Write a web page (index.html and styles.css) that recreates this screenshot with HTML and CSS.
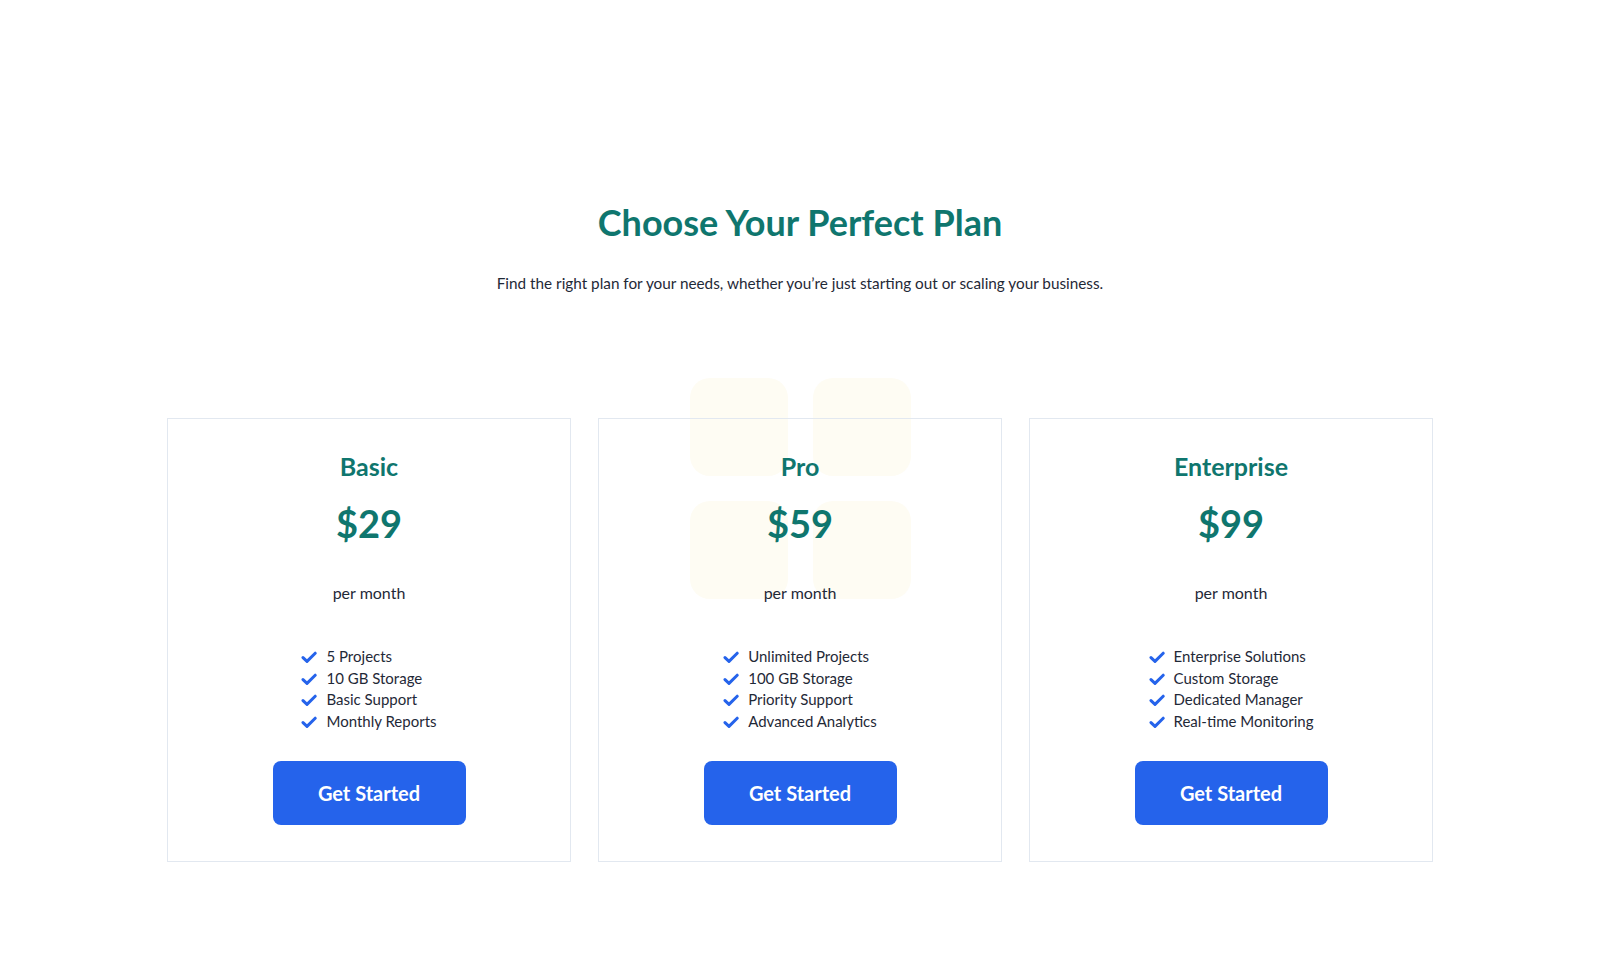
FILE: index.html
```html
<!DOCTYPE html>
<html lang="en">
<head>
<meta charset="utf-8">
<title>Pricing</title>
<link rel="stylesheet" href="styles.css">
</head>
<body>
<section class="pricing">
  <header class="pricing-head">
    <h1 class="pricing-title">Choose Your Perfect Plan</h1>
    <p class="pricing-sub">Find the right plan for your needs, whether you’re just starting out or scaling your business.</p>
  </header>
  <div class="plans">
    <div class="deco" aria-hidden="true">
      <span class="deco-tile"></span><span class="deco-tile"></span>
      <span class="deco-tile"></span><span class="deco-tile"></span>
    </div>
    <article class="plan">
      <h2 class="plan-name">Basic</h2>
      <div class="plan-price">$29</div>
      <div class="plan-period">per month</div>
      <ul class="plan-features">
        <li><svg class="check" viewBox="0 0 16 16"><path d="M2 8.6 L6 12.4 L14.2 4.2"/></svg>5 Projects</li>
        <li><svg class="check" viewBox="0 0 16 16"><path d="M2 8.6 L6 12.4 L14.2 4.2"/></svg>10 GB Storage</li>
        <li><svg class="check" viewBox="0 0 16 16"><path d="M2 8.6 L6 12.4 L14.2 4.2"/></svg>Basic Support</li>
        <li><svg class="check" viewBox="0 0 16 16"><path d="M2 8.6 L6 12.4 L14.2 4.2"/></svg>Monthly Reports</li>
      </ul>
      <a class="plan-btn" href="#">Get Started</a>
    </article>
    <article class="plan">
      <h2 class="plan-name">Pro</h2>
      <div class="plan-price">$59</div>
      <div class="plan-period">per month</div>
      <ul class="plan-features">
        <li><svg class="check" viewBox="0 0 16 16"><path d="M2 8.6 L6 12.4 L14.2 4.2"/></svg>Unlimited Projects</li>
        <li><svg class="check" viewBox="0 0 16 16"><path d="M2 8.6 L6 12.4 L14.2 4.2"/></svg>100 GB Storage</li>
        <li><svg class="check" viewBox="0 0 16 16"><path d="M2 8.6 L6 12.4 L14.2 4.2"/></svg>Priority Support</li>
        <li><svg class="check" viewBox="0 0 16 16"><path d="M2 8.6 L6 12.4 L14.2 4.2"/></svg>Advanced Analytics</li>
      </ul>
      <a class="plan-btn" href="#">Get Started</a>
    </article>
    <article class="plan">
      <h2 class="plan-name">Enterprise</h2>
      <div class="plan-price">$99</div>
      <div class="plan-period">per month</div>
      <ul class="plan-features">
        <li><svg class="check" viewBox="0 0 16 16"><path d="M2 8.6 L6 12.4 L14.2 4.2"/></svg>Enterprise Solutions</li>
        <li><svg class="check" viewBox="0 0 16 16"><path d="M2 8.6 L6 12.4 L14.2 4.2"/></svg>Custom Storage</li>
        <li><svg class="check" viewBox="0 0 16 16"><path d="M2 8.6 L6 12.4 L14.2 4.2"/></svg>Dedicated Manager</li>
        <li><svg class="check" viewBox="0 0 16 16"><path d="M2 8.6 L6 12.4 L14.2 4.2"/></svg>Real-time Monitoring</li>
      </ul>
      <a class="plan-btn" href="#">Get Started</a>
    </article>
  </div>
</section>
</body>
</html>
```
FILE: styles.css
```css
* { box-sizing: border-box; }
html, body { margin: 0; padding: 0; background: #ffffff; }
body {
  font-family: "Lato", "Noto Sans", sans-serif;
  color: #1f2937;
}
.pricing {
  width: 1266px;
  margin: 0 auto;
  padding-top: 200px;
}
.pricing-head { text-align: center; }
.pricing-title {
  margin: 0;
  font-size: 36px;
  line-height: 44px;
  font-weight: 700;
  color: #0f766e;
}
.pricing-sub {
  margin: 27px 0 0;
  font-size: 15.3px;
  line-height: 24px;
  color: #1f2937;
}
.plans {
  position: relative;
  margin-top: 123px;
  display: grid;
  grid-template-columns: repeat(3, 1fr);
  gap: 27px;
}
.deco {
  position: absolute;
  left: 523px;
  top: -40px;
  width: 221px;
  display: grid;
  grid-template-columns: 98px 98px;
  gap: 25px;
  z-index: 0;
}
.deco-tile {
  display: block;
  height: 98px;
  border-radius: 20px;
  background: #fefcf3;
}
.plan {
  position: relative;
  z-index: 1;
  border: 1px solid #e2e8f0;
  padding: 31px 20px 36px;
  text-align: center;
  display: flex;
  flex-direction: column;
  align-items: center;
}
.plan-name {
  margin: 0;
  font-size: 25px;
  line-height: 32px;
  font-weight: 700;
  color: #0f766e;
}
.plan-price {
  margin-top: 18px;
  font-size: 38px;
  line-height: 46px;
  font-weight: 700;
  color: #0f766e;
}
.plan-period {
  margin-top: 35px;
  font-size: 16px;
  line-height: 24px;
  color: #1f2937;
}
.plan-features {
  list-style: none;
  margin: 41px 0 0;
  padding: 0;
  text-align: left;
}
.plan-features li {
  display: flex;
  align-items: center;
  gap: 9px;
  font-size: 15px;
  line-height: 21.7px;
  color: #1f2937;
}
.check {
  width: 16px;
  height: 16px;
  flex: none;
  fill: none;
  stroke: #2563eb;
  stroke-width: 3;
  stroke-linecap: round;
  stroke-linejoin: round;
}
.plan-btn {
  margin-top: 28px;
  width: 193px;
  height: 64px;
  display: flex;
  align-items: center;
  justify-content: center;
  background: #2563eb;
  color: #ffffff;
  border-radius: 8px;
  text-decoration: none;
  font-size: 20px;
  font-weight: 700;
}
```
